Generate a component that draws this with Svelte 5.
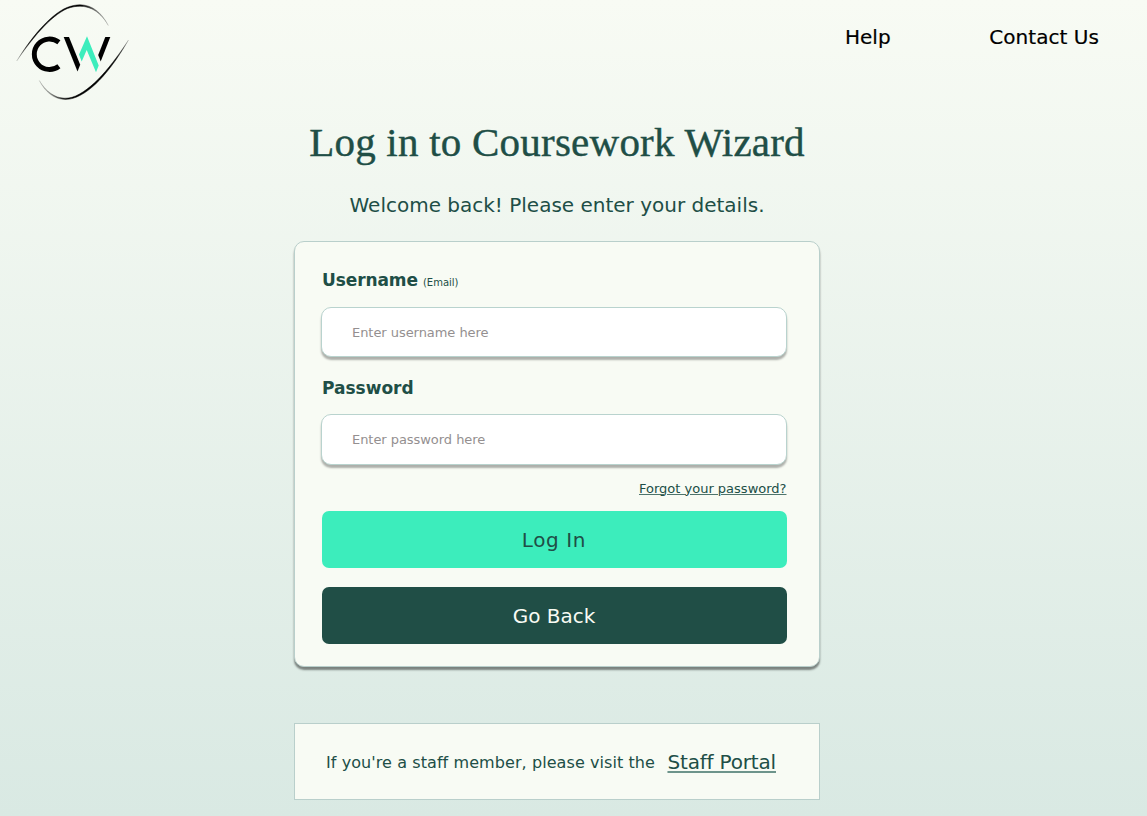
<script>
  let username = $state('');
  let password = $state('');
</script>

<div class="page">
  <header>
    <svg class="logo" width="150" height="104" viewBox="0 0 150 104" aria-label="Coursework Wizard">
      <defs>
        <linearGradient id="fadeTop" gradientUnits="userSpaceOnUse" x1="17" y1="60" x2="109" y2="26">
          <stop offset="0" stop-opacity="0.2" />
          <stop offset="0.2" stop-opacity="1" />
          <stop offset="0.8" stop-opacity="1" />
          <stop offset="1" stop-opacity="0.2" />
        </linearGradient>
        <linearGradient id="fadeBottom" gradientUnits="userSpaceOnUse" x1="39" y1="80" x2="129" y2="40">
          <stop offset="0" stop-opacity="0.2" />
          <stop offset="0.2" stop-opacity="1" />
          <stop offset="0.8" stop-opacity="1" />
          <stop offset="1" stop-opacity="0.2" />
        </linearGradient>
      </defs>
      <path d="M16.7 61C29 41 49 15 67 7.500C86 0 100 9 108.300 25.500C100 10.500 86 1.800 67.500 8.500C50 16 31 40 16.700 61Z" fill="url(#fadeTop)" stroke="url(#fadeTop)" stroke-width=".5" />
      <path d="M39.300 80.500C46 94 58 102.500 73 98.300C94 92 114 65 128.500 40C113 64 92 91 72 97.300C58 101 47 93 39.300 80.500Z" fill="url(#fadeBottom)" stroke="url(#fadeBottom)" stroke-width=".5" />
      <path d="M58.900 42.300A15.200 15.200 0 1 0 58.900 66.200" fill="none" stroke="#000" stroke-width="4.900" />
      <path d="M63.700 37H69L80.200 64.700L77.500 71.500Z" />
      <path d="M105.300 37H110.300L100.700 61.500L98.200 55Z" />
      <path d="M79 54.500L87 36.200L98.700 65.500L96 72.200L86.700 50L81.700 61.500Z" fill="#3cedbc" />
    </svg>
    <nav>
      <a href="#help">Help</a>
      <a class="contact" href="#contact">Contact Us</a>
    </nav>
  </header>

  <main>
    <h1>Log in to Coursework Wizard</h1>
    <p class="welcome">Welcome back! Please enter your details.</p>

    <form class="card" onsubmit={(e) => e.preventDefault()}>
      <label for="username"><b class="user">Username</b> <small>(Email)</small></label>
      <input id="username" type="text" placeholder="Enter username here" bind:value={username} />
      <label for="password"><b>Password</b></label>
      <input id="password" type="password" placeholder="Enter password here" bind:value={password} />
      <a class="forgot" href="#forgot">Forgot your password?</a>
      <button class="login" type="submit">Log In</button>
      <button class="back" type="button">Go Back</button>
    </form>

    <section class="staff">
      <span>If you're a staff member, please visit the</span>
      <a href="#staff">Staff Portal</a>
    </section>
  </main>
</div>

<style>
  :global(body) { margin: 0; }
  .page {
    box-sizing: border-box;
    width: 1147px;
    height: 816px;
    overflow: hidden;
    background: linear-gradient(#f8fbf4, #d9e9e3);
    color: #204e46;
    font-family: "DejaVu Sans", sans-serif;
  }
  header {
    display: flex;
    justify-content: space-between;
    height: 104px;
  }
  .logo { display: block; }
  nav {
    display: flex;
    justify-content: space-between;
    width: 254px;
    padding: 25px 48px 0 0;
    font-size: 20px;
    line-height: 24px;
  }
  nav a {
    color: #000;
    text-decoration: none;
    white-space: nowrap;
    -webkit-text-stroke: 0.2px #000;
  }
  .contact { letter-spacing: 0.05px; }
  main {
    width: 526px;
    margin-left: 294px;
  }
  h1 {
    margin: 0;
    padding-top: 13px;
    font: 400 41px/50px "Liberation Serif", serif;
    letter-spacing: 0.23px;
    text-align: center;
    white-space: nowrap;
    -webkit-text-stroke: 0.4px #204e46;
  }
  .welcome {
    margin: 23px 0 0;
    height: 51px;
    font-size: 20px;
    line-height: 31px;
    text-align: center;
    white-space: nowrap;
  }
  .card {
    box-sizing: border-box;
    display: flex;
    flex-direction: column;
    height: 426px;
    padding: 24px 33px 0 25.500px;
    border: 1px solid #b9cfcb;
    border-radius: 10px;
    background: #f8fbf4;
    box-shadow: 0 3px 2px rgba(0, 0, 0, 0.45);
  }
  label {
    display: block;
    height: 28px;
    padding-left: 1.500px;
    line-height: 28px;
    white-space: nowrap;
  }
  b { font-size: 17px; }
  .user { letter-spacing: -0.1px; }
  small { font-size: 10px; }
  input {
    box-sizing: border-box;
    width: 466px;
    height: 50.500px;
    margin: 12.500px 0 16.500px;
    padding: 1px 30.500px 0;
    border: 1px solid #b9d3ce;
    border-radius: 10px;
    outline: none;
    background: #fff;
    box-shadow: 0 3px 2px rgba(0, 0, 0, 0.3);
    color: #204e46;
    font: 13px "DejaVu Sans", sans-serif;
    letter-spacing: -0.05px;
  }
  input::placeholder { color: #948f90; opacity: 1; }
  .forgot {
    align-self: flex-end;
    height: 20px;
    margin: -2.500px -0.500px 12px 0;
    color: #204e46;
    font-size: 13px;
    line-height: 20px;
    text-decoration-color: #4e746c;
    text-decoration-thickness: 1px;
    text-underline-offset: 1px;
  }
  button {
    width: 465px;
    height: 57px;
    margin-left: 1px;
    padding: 1px 0 0;
    border: 0;
    border-radius: 7px;
    font: 20px "DejaVu Sans", sans-serif;
  }
  .login { background: #3cedbc; color: #204e46; letter-spacing: 0.6px; }
  .back { margin-top: 19px; background: #204e46; color: #f8fbf4; }
  .staff {
    box-sizing: border-box;
    display: flex;
    justify-content: space-between;
    align-items: center;
    height: 76.500px;
    margin-top: 56.400px;
    padding: 1px 43px 0 31px;
    border: 1px solid #b9cfcb;
    background: #f8fbf4;
    font-size: 16px;
    letter-spacing: 0.08px;
    white-space: nowrap;
  }
  .staff a {
    color: #204e46;
    font-size: 20px;
    letter-spacing: -0.18px;
    text-decoration-color: #6d948b;
    text-decoration-thickness: 2px;
    text-underline-offset: 2px;
  }
</style>
